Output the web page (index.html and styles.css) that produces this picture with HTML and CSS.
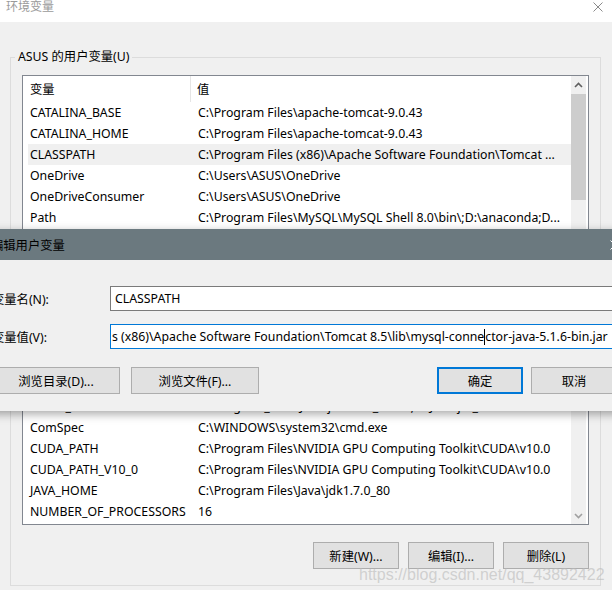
FILE: index.html
```html
<!DOCTYPE html>
<html lang="zh-CN">
<head>
<meta charset="utf-8">
<title>环境变量</title>
<link rel="stylesheet" href="styles.css">
</head>
<body>
<div class="window">
  <div class="titlebar">
    <span class="title">环境变量</span>
    <svg class="win-close" viewBox="0 0 10 10"><path d="M0.5 0.5 L9.5 9.5 M9.5 0.5 L0.5 9.5" stroke="#8a8a8a" stroke-width="1" fill="none"/></svg>
  </div>
  <div class="client">
    <fieldset class="group">
      <legend>ASUS 的用户变量(U)</legend>
      <div class="listbox">
        <div class="list">
          <div class="header"><span class="h1">变量</span><span class="h2">值</span></div>
          <div class="row"><span class="c1">CATALINA_BASE</span><span class="c2">C:\Program Files\apache-tomcat-9.0.43</span></div>
          <div class="row"><span class="c1">CATALINA_HOME</span><span class="c2">C:\Program Files\apache-tomcat-9.0.43</span></div>
          <div class="row selected"><span class="c1">CLASSPATH</span><span class="c2">C:\Program Files (x86)\Apache Software Foundation\Tomcat ...</span></div>
          <div class="row"><span class="c1">OneDrive</span><span class="c2">C:\Users\ASUS\OneDrive</span></div>
          <div class="row"><span class="c1">OneDriveConsumer</span><span class="c2">C:\Users\ASUS\OneDrive</span></div>
          <div class="row"><span class="c1">Path</span><span class="c2">C:\Program Files\MySQL\MySQL Shell 8.0\bin\;D:\anaconda;D...</span></div>
          <div class="row"><span class="c1">PyCharm Community Edition</span><span class="c2">D:\PyCharm Community Edition 2020.1\bin;</span></div>
          <div class="row"><span class="c1">TEMP</span><span class="c2">C:\Users\ASUS\AppData\Local\Temp</span></div>
          <div class="row"><span class="c1">TMP</span><span class="c2">C:\Users\ASUS\AppData\Local\Temp</span></div>
          <div class="row"><span class="c1">CATALINA_BASE</span><span class="c2">C:\Program Files\apache-tomcat-9.0.43</span></div>
          <div class="row"><span class="c1">CATALINA_HOME</span><span class="c2">C:\Program Files\apache-tomcat-9.0.43</span></div>
          <div class="row"><span class="c1">CLASSPATH</span><span class="c2">.;%JAVA_HOME%\lib;%JAVA_HOME%\lib\tools.jar</span></div>
          <div class="row"><span class="c1">COMPUTERNAME</span><span class="c2">LAPTOP-ASUS</span></div>
          <div class="row"><span class="c1">ChocolateyInstall</span><span class="c2">C:\ProgramData\chocolatey</span></div>
          <div class="row"><span class="c1">CLASS_PATH</span><span class="c2">C:\Program_Files\Java\jdk1.7.0_80\lib;C:\Java\jre_7\lib</span></div>
          <div class="row"><span class="c1">ComSpec</span><span class="c2">C:\WINDOWS\system32\cmd.exe</span></div>
          <div class="row"><span class="c1">CUDA_PATH</span><span class="c2">C:\Program Files\NVIDIA GPU Computing Toolkit\CUDA\v10.0</span></div>
          <div class="row"><span class="c1">CUDA_PATH_V10_0</span><span class="c2">C:\Program Files\NVIDIA GPU Computing Toolkit\CUDA\v10.0</span></div>
          <div class="row"><span class="c1">JAVA_HOME</span><span class="c2">C:\Program Files\Java\jdk1.7.0_80</span></div>
          <div class="row"><span class="c1">NUMBER_OF_PROCESSORS</span><span class="c2">16</span></div>
        </div>
        <div class="scrollbar">
          <div class="sb-btn"><svg width="9" height="6" viewBox="0 0 9 6"><path d="M1 5 L4.5 1.5 L8 5" stroke="#606060" stroke-width="1.6" fill="none"/></svg></div>
          <div class="thumb"></div>
          <div class="sb-space"></div>
          <div class="sb-btn"><svg width="9" height="6" viewBox="0 0 9 6"><path d="M1 1 L4.5 4.5 L8 1" stroke="#a0a0a0" stroke-width="1.6" fill="none"/></svg></div>
        </div>
      </div>
      <div class="actions">
        <button class="btn">新建(W)...</button>
        <button class="btn">编辑(I)...</button>
        <button class="btn">删除(L)</button>
      </div>
    </fieldset>
  </div>

  <div class="dialog">
    <div class="dlg-title">
      <span>编辑用户变量</span>
      <svg class="dlg-close" viewBox="0 0 10 10"><path d="M0.5 0.5 L9.5 9.5 M9.5 0.5 L0.5 9.5" stroke="#ffffff" stroke-width="1" fill="none"/></svg>
    </div>
    <div class="dlg-body">
      <div class="field">
        <span class="label">变量名(N):</span>
        <div class="input">CLASSPATH</div>
      </div>
      <div class="field second">
        <span class="label">变量值(V):</span>
        <div class="input focus">s (x86)\Apache Software Foundation\Tomcat 8.5\lib\mysql-conne<span class="caret"></span>ctor-java-5.1.6-bin.jar</div>
      </div>
      <div class="dlg-buttons">
        <button class="btn wide">浏览目录(D)...</button>
        <button class="btn wide">浏览文件(F)...</button>
        <button class="btn ok">确定</button>
        <button class="btn cancel">取消</button>
      </div>
    </div>
  </div>

  <div class="watermark">https://blog.csdn.net/qq_43892422</div>
</div>
</body>
</html>
```

FILE: styles.css
```css
* { box-sizing: border-box; }

body {
  margin: 0;
  width: 612px;
  height: 590px;
  overflow: hidden;
  background: #f0f0f0;
  font-family: "Noto Sans", "Noto Sans CJK SC", sans-serif;
  font-size: 12.3px;
  color: #000;
}

.window {
  position: relative;
  width: 612px;
  height: 590px;
  overflow: hidden;
}

.titlebar {
  height: 22px;
  background: #fff;
  display: flex;
  justify-content: space-between;
  align-items: flex-start;
  padding: 0 9px 0 6px;
}

.title {
  color: #9a9a9a;
  font-size: 12px;
  line-height: 14px;
}

.win-close {
  width: 10px;
  height: 10px;
  margin-top: 2px;
}

.client {
  padding: 27px 11px 0 10px;
}

.group {
  margin: 0;
  min-width: 0;
  border: 1px solid #dcdcdc;
  padding: 10px 11px 16px 11px;
}

.group legend {
  padding: 0 3px;
  margin-left: -7px;
  line-height: 16px;
}

.listbox {
  display: flex;
  height: 450px;
  border: 1px solid #828790;
  background: #fff;
}

.list {
  width: 548px;
  overflow: hidden;
}

.header {
  display: flex;
  height: 26px;
  align-items: stretch;
}

.h1 {
  width: 168px;
  padding-left: 7px;
  border-right: 1px solid #e5e5e5;
  display: flex;
  align-items: center;
}

.h2 {
  padding-left: 6px;
  display: flex;
  align-items: center;
}

.row {
  display: flex;
  height: 21px;
  line-height: 21px;
  margin-left: 5px;
  white-space: nowrap;
}

.row.selected {
  background: #f0f0f0;
}

.c1 {
  width: 170px;
  flex: none;
  padding-left: 2px;
  overflow: hidden;
}

.c2 {
  flex: 1;
  overflow: hidden;
}

.scrollbar {
  width: 15px;
  margin-right: 2px;
  background: #f0f0f0;
  display: flex;
  flex-direction: column;
}

.sb-btn {
  height: 17px;
  display: flex;
  align-items: center;
  justify-content: center;
}

.thumb {
  height: 106px;
  margin-top: 1px;
  background: #cdcdcd;
}

.sb-space {
  flex: 1;
}

.actions {
  display: flex;
  justify-content: flex-end;
  gap: 9px;
  margin-top: 17px;
}

.btn {
  height: 27px;
  width: 86px;
  padding: 0;
  background: #e1e1e1;
  border: 1px solid #adadad;
  font-family: inherit;
  font-size: 12.3px;
  color: #000;
}

.dialog {
  position: absolute;
  top: 229px;
  left: -18px;
  width: 650px;
  height: 182px;
  background: #f0f0f0;
  box-shadow: 0 3px 9px rgba(0, 0, 0, 0.35);
}

.dlg-title {
  height: 31px;
  background: #6b797f;
  display: flex;
  align-items: center;
  justify-content: space-between;
  padding: 0 12px 0 9px;
}

.dlg-close {
  width: 10px;
  height: 10px;
}

.dlg-body {
  padding: 26px 15px 0 10px;
}

.field {
  display: grid;
  grid-template-columns: 118px 1fr;
  align-items: center;
}

.field.second {
  margin-top: 13px;
}

.input {
  height: 25px;
  line-height: 23px;
  border: 1px solid #7a7a7a;
  background: #fff;
  padding-left: 4px;
  white-space: nowrap;
  overflow: hidden;
}

.input.focus {
  border-color: #0078d7;
  padding-left: 1px;
}

.caret {
  display: inline-block;
  height: 16px;
  width: 0;
  border-left: 1px solid #000;
  vertical-align: -4px;
}

.dlg-buttons {
  display: flex;
  gap: 11px;
  margin-top: 18px;
}

.btn.wide {
  width: 128px;
}

.btn.ok {
  margin-left: auto;
  border: 2px solid #0078d7;
}

.btn.cancel {
  margin-left: -3px;
}

.watermark {
  position: absolute;
  left: 359px;
  top: 566px;
  font-family: "Liberation Sans", sans-serif;
  font-size: 16px;
  color: rgba(185, 185, 185, 0.6);
  white-space: nowrap;
}
```
